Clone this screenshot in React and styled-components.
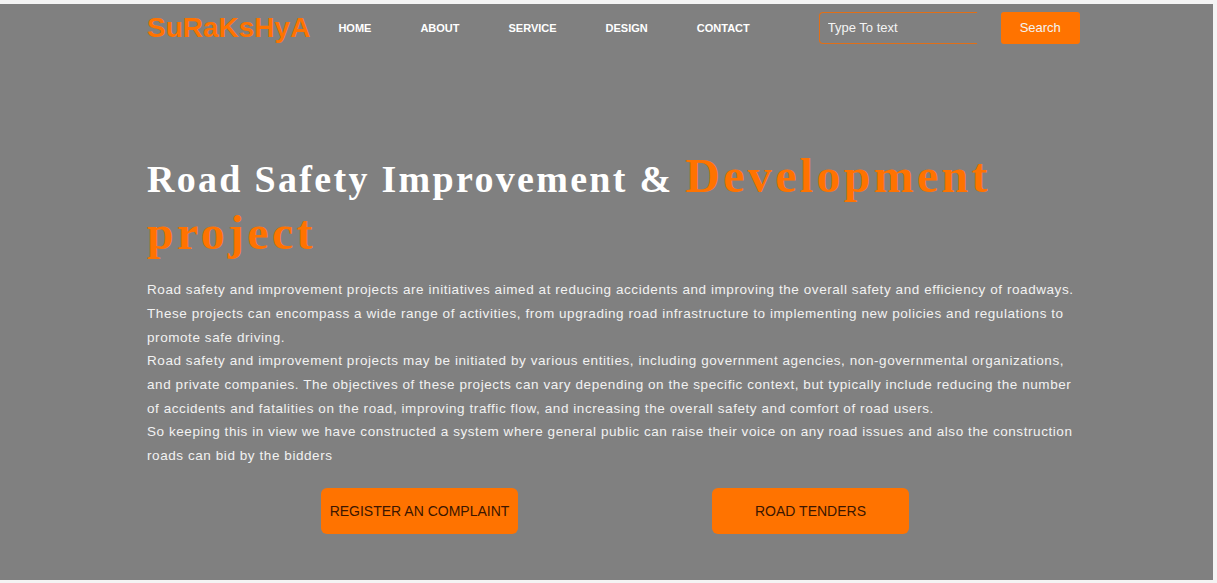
import styled, { createGlobalStyle } from "styled-components";

const GlobalStyle = createGlobalStyle`
    html, body {
        margin: 0;
        padding: 0;
        background: #f4f4f4;
        font-family: "Liberation Sans", Arial, sans-serif;
    }
`

const Pagina = styled.div`
    width: 1213px;
    height: 576px;
    margin-top: 4px;
    background-color: #808080;
    overflow: hidden;
`

const BarraNav = styled.nav`
    display: flex;
    flex-direction: row;
    align-items: center;
    height: 47px;
    padding-left: 147px;
`

const Logo = styled.div`
    font-family: "Liberation Sans", Arial, sans-serif;
    font-weight: 700;
    font-size: 28px;
    color: #ff7300;
    margin-right: 28px;
`

const ListaEnlaces = styled.ul`
    display: flex;
    flex-direction: row;
    gap: 49px;
    list-style: none;
    margin: 0;
    padding: 0;
`

const Enlace = styled.li`
    font-weight: 700;
    font-size: 11px;
    color: #ffffff;
`

const CajaBusqueda = styled.input`
    width: 158px;
    height: 32px;
    box-sizing: border-box;
    margin-left: 69px;
    padding: 0 8px;
    background-color: #808080;
    border-style: solid;
    border-color: #e06f18;
    border-width: 1px 0 1px 1px;
    border-radius: 4px 0 0 4px;
    font-family: "Liberation Sans", Arial, sans-serif;
    font-size: 13px;
    color: #ffffff;
    outline: none;

    &::placeholder {
        color: #f4f4f4;
        opacity: 1;
    }
`

const BotonBuscar = styled.button`
    width: 79px;
    height: 32px;
    margin-left: 24px;
    background-color: #ff7300;
    border: none;
    border-radius: 3px;
    font-family: "Liberation Sans", Arial, sans-serif;
    font-size: 13px;
    color: #f3f3f3;
`

const Contenido = styled.section`
    display: flex;
    flex-direction: column;
    width: 930px;
    padding-left: 147px;
`

const Titulo = styled.h1`
    font-family: "Liberation Serif", "Times New Roman", serif;
    font-weight: 700;
    font-size: 38px;
    letter-spacing: 2.3px;
    line-height: 1.18;
    color: #ffffff;
    margin: 97px 0 0 0;
`

const Resaltado = styled.span`
    font-size: 48px;
    letter-spacing: 3.3px;
    color: #ff7300;
`

const Parrafo = styled.p`
    font-family: "Liberation Sans", Arial, sans-serif;
    font-size: 13.5px;
    letter-spacing: 0.57px;
    line-height: 23.7px;
    color: #f2f2f2;
    margin: 17px 0 0 0;
`

const FilaBotones = styled.div`
    display: flex;
    flex-direction: row;
    justify-content: center;
    gap: 194px;
    padding-left: 6px;
    margin-top: 20px;
`

const BotonAccion = styled.button`
    width: 197px;
    height: 46px;
    background-color: #ff7300;
    border: none;
    border-radius: 6px;
    font-family: "Liberation Sans", Arial, sans-serif;
    font-size: 14px;
    color: #3b1600;
    cursor: pointer;
`

const enlaces = ["HOME", "ABOUT", "SERVICE", "DESIGN", "CONTACT"]

const App = () => {
    return (
    <>
        <GlobalStyle />
        <Pagina>
            <BarraNav>
                <Logo>SuRaKsHyA</Logo>
                <ListaEnlaces>
                    {enlaces.map(e => <Enlace key={e}>{e}</Enlace>)}
                </ListaEnlaces>
                <CajaBusqueda placeholder="Type To text" />
                <BotonBuscar>Search</BotonBuscar>
            </BarraNav>
            <Contenido>
                <Titulo>Road Safety Improvement & <Resaltado>Development project</Resaltado></Titulo>
                <Parrafo>
                    Road safety and improvement projects are initiatives aimed at reducing accidents and improving the overall safety and efficiency of roadways. These projects can encompass a wide range of activities, from upgrading road infrastructure to implementing new policies and regulations to promote safe driving.<br />
                    Road safety and improvement projects may be initiated by various entities, including government agencies, non-governmental organizations, and private companies. The objectives of these projects can vary depending on the specific context, but typically include reducing the number of accidents and fatalities on the road, improving traffic flow, and increasing the overall safety and comfort of road users.<br />
                    So keeping this in view we have constructed a system where general public can raise their voice on any road issues and also the construction roads can bid by the bidders
                </Parrafo>
                <FilaBotones>
                    <BotonAccion>REGISTER AN COMPLAINT</BotonAccion>
                    <BotonAccion>ROAD TENDERS</BotonAccion>
                </FilaBotones>
            </Contenido>
        </Pagina>
    </>)
}

export default App
